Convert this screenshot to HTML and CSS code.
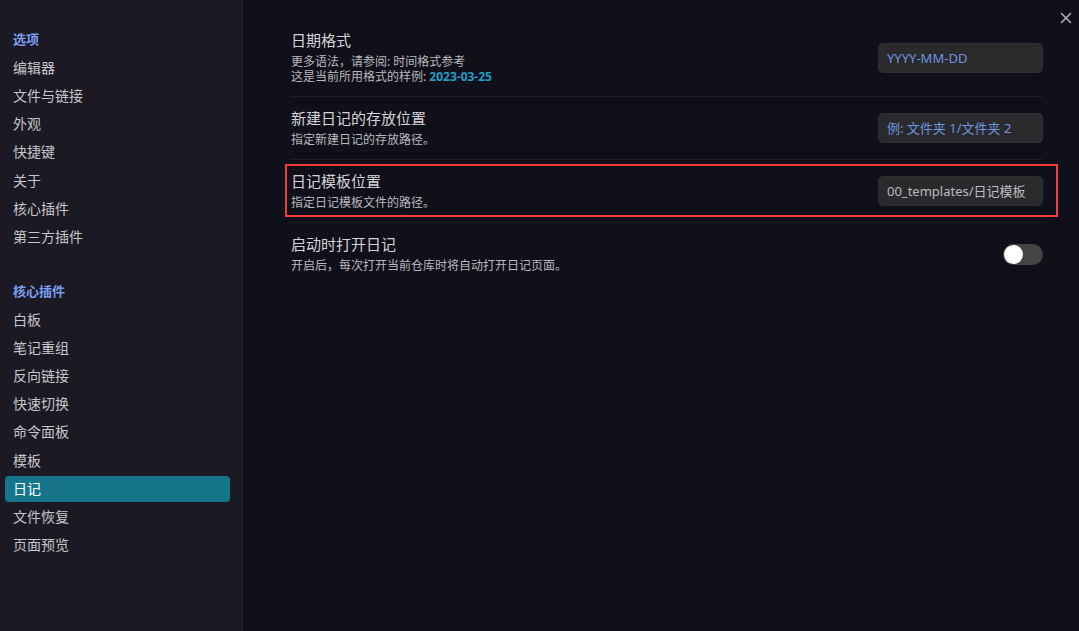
FILE: index.html
```html
<!DOCTYPE html>
<html lang="zh-CN">
<head>
<meta charset="utf-8">
<title>设置 - 日记</title>
<link rel="stylesheet" href="styles.css">
</head>
<body>
<div class="modal">
  <nav class="sidebar">
    <div class="nav-group">
      <div class="nav-title">选项</div>
      <div class="nav-item">编辑器</div>
      <div class="nav-item">文件与链接</div>
      <div class="nav-item">外观</div>
      <div class="nav-item">快捷键</div>
      <div class="nav-item">关于</div>
      <div class="nav-item">核心插件</div>
      <div class="nav-item">第三方插件</div>
    </div>
    <div class="nav-group">
      <div class="nav-title">核心插件</div>
      <div class="nav-item">白板</div>
      <div class="nav-item">笔记重组</div>
      <div class="nav-item">反向链接</div>
      <div class="nav-item">快速切换</div>
      <div class="nav-item">命令面板</div>
      <div class="nav-item">模板</div>
      <div class="nav-item active">日记</div>
      <div class="nav-item">文件恢复</div>
      <div class="nav-item">页面预览</div>
    </div>
  </nav>
  <main class="content">
    <button class="close" aria-label="关闭">
      <svg width="12" height="12" viewBox="0 0 12 12"><path d="M1.5 1.5L10.5 10.5M10.5 1.5L1.5 10.5" stroke="#b0b0b8" stroke-width="1.6" stroke-linecap="round"/></svg>
    </button>
    <div class="setting">
      <div class="info">
        <div class="name">日期格式</div>
        <div class="desc">更多语法，请参阅: 时间格式参考<br>这是当前所用格式的样例: <span class="sample">2023-03-25</span></div>
      </div>
      <div class="control"><div class="input placeholder">YYYY-MM-DD</div></div>
    </div>
    <div class="setting">
      <div class="info">
        <div class="name">新建日记的存放位置</div>
        <div class="desc">指定新建日记的存放路径。</div>
      </div>
      <div class="control"><div class="input placeholder">例: 文件夹 1/文件夹 2</div></div>
    </div>
    <div class="setting highlighted">
      <div class="info">
        <div class="name">日记模板位置</div>
        <div class="desc">指定日记模板文件的路径。</div>
      </div>
      <div class="control"><div class="input">00_templates/日记模板</div></div>
    </div>
    <div class="setting">
      <div class="info">
        <div class="name">启动时打开日记</div>
        <div class="desc">开启后，每次打开当前仓库时将自动打开日记页面。</div>
      </div>
      <div class="control"><div class="toggle"><span class="knob"></span></div></div>
    </div>
  </main>
</div>
</body>
</html>
```

FILE: styles.css
```css
* { box-sizing: border-box; }
html, body { margin: 0; padding: 0; height: 100%; }
body {
  font-family: "Segoe UI", "Noto Sans", "Noto Sans CJK SC", sans-serif;
  background: #10101a;
  color: #d8d8dc;
  overflow: hidden;
}
.modal {
  display: flex;
  height: 631px;
  width: 1079px;
}
.sidebar {
  width: 243px;
  flex: 0 0 243px;
  background: #1b1923;
  border-right: 1px solid #25252f;
  padding-top: 25px;
}
.nav-group + .nav-group { margin-top: 27px; }
.nav-title {
  height: 30px;
  line-height: 28px;
  padding-left: 13px;
  font-size: 13px;
  font-weight: 700;
  color: #7a9ff0;
}
.nav-item {
  height: 26px;
  line-height: 26px;
  margin: 0 12px 2.15px 5px;
  padding-left: 8px;
  font-size: 14px;
  color: #c6c6cb;
  border-radius: 4px;
}
.nav-item.active {
  background: #17758b;
  color: #ffffff;
}
.content {
  flex: 1;
  position: relative;
  padding: 19px 36px 0 48px;
}
.close {
  position: absolute;
  top: 12px;
  right: 7px;
  width: 12px;
  height: 12px;
  padding: 0;
  border: 0;
  background: none;
  display: flex;
}
.setting {
  position: relative;
  display: flex;
  align-items: center;
  justify-content: space-between;
  padding: 12px 0 12px;
}
.setting + .setting { border-top: 1px solid #1d1e27; }
.setting.highlighted::after {
  content: "";
  position: absolute;
  left: -6px;
  right: -15px;
  top: 4px;
  bottom: 5px;
  border: 2px solid #f23b3b;
  pointer-events: none;
}
.name {
  font-size: 15px;
  line-height: 18px;
  color: #d4d4d8;
}
.desc {
  margin-top: 5px;
  font-size: 12px;
  line-height: 15px;
  color: #b9b9be;
}
.sample {
  color: #1f9fc7;
  font-weight: 700;
}
.input {
  width: 165px;
  height: 30px;
  line-height: 28px;
  padding: 0 8px;
  background: #2a2a2c;
  border: 1px solid #303034;
  border-radius: 5px;
  font-size: 13px;
  color: #bcbcc0;
  white-space: nowrap;
  overflow: hidden;
}
.input.placeholder { color: #6f95e0; }
.toggle {
  width: 40px;
  height: 21px;
  border-radius: 11px;
  background: #444446;
  display: flex;
  align-items: center;
  padding-left: 1px;
}
.knob {
  width: 19px;
  height: 19px;
  border-radius: 50%;
  background: #ffffff;
}
```
